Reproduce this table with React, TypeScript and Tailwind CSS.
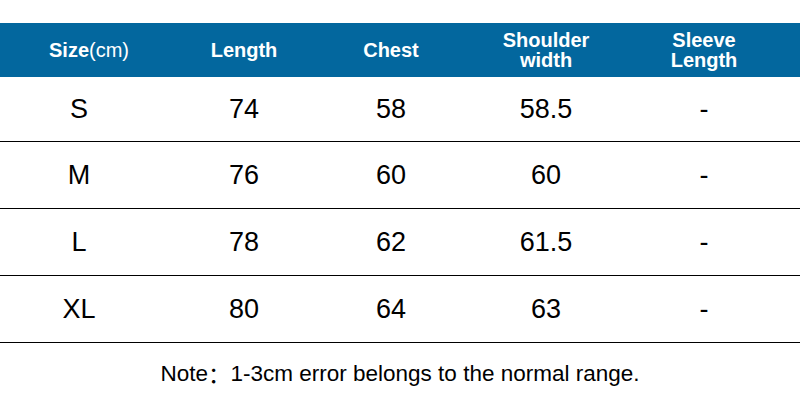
import React from 'react';

const rows = [
  { size: 'S', length: '74', chest: '58', shoulder: '58.5', sleeve: '-' },
  { size: 'M', length: '76', chest: '60', shoulder: '60', sleeve: '-' },
  { size: 'L', length: '78', chest: '62', shoulder: '61.5', sleeve: '-' },
  { size: 'XL', length: '80', chest: '64', shoulder: '63', sleeve: '-' },
];

const cols = 'grid grid-cols-[158px_172px_122px_188px_128px]';

export default function App() {
  return (
    <div className="w-[800px] h-[405px] bg-white pt-[23px] font-['Liberation_Sans',Arial,sans-serif] overflow-hidden">
      {/* Header */}
      <div className={`${cols} h-[54px] bg-[#03679e] text-white text-[20px] leading-[20px] font-bold items-center text-center`}>
        <div className="pl-[20px]">
          Size<span className="font-normal">(cm)</span>
        </div>
        <div>Length</div>
        <div>Chest</div>
        <div>Shoulder<br />width</div>
        <div>Sleeve<br />Length</div>
      </div>

      {/* Rows */}
      {rows.map((r, i) => (
        <div
          key={r.size}
          className={`${cols} ${i === 0 ? 'h-[65px]' : 'h-[67px]'} border-b border-black items-center text-center text-[27px] text-black`}
        >
          <div>{r.size}</div>
          <div>{r.length}</div>
          <div>{r.chest}</div>
          <div>{r.shoulder}</div>
          <div>{r.sleeve}</div>
        </div>
      ))}

      <div className="h-[62px] flex items-center justify-center text-[22.5px] text-black">
        Note<span className="font-['Noto_Sans_CJK_SC',sans-serif]">：</span>1-3cm error belongs to the normal range.
      </div>
    </div>
  );
}
